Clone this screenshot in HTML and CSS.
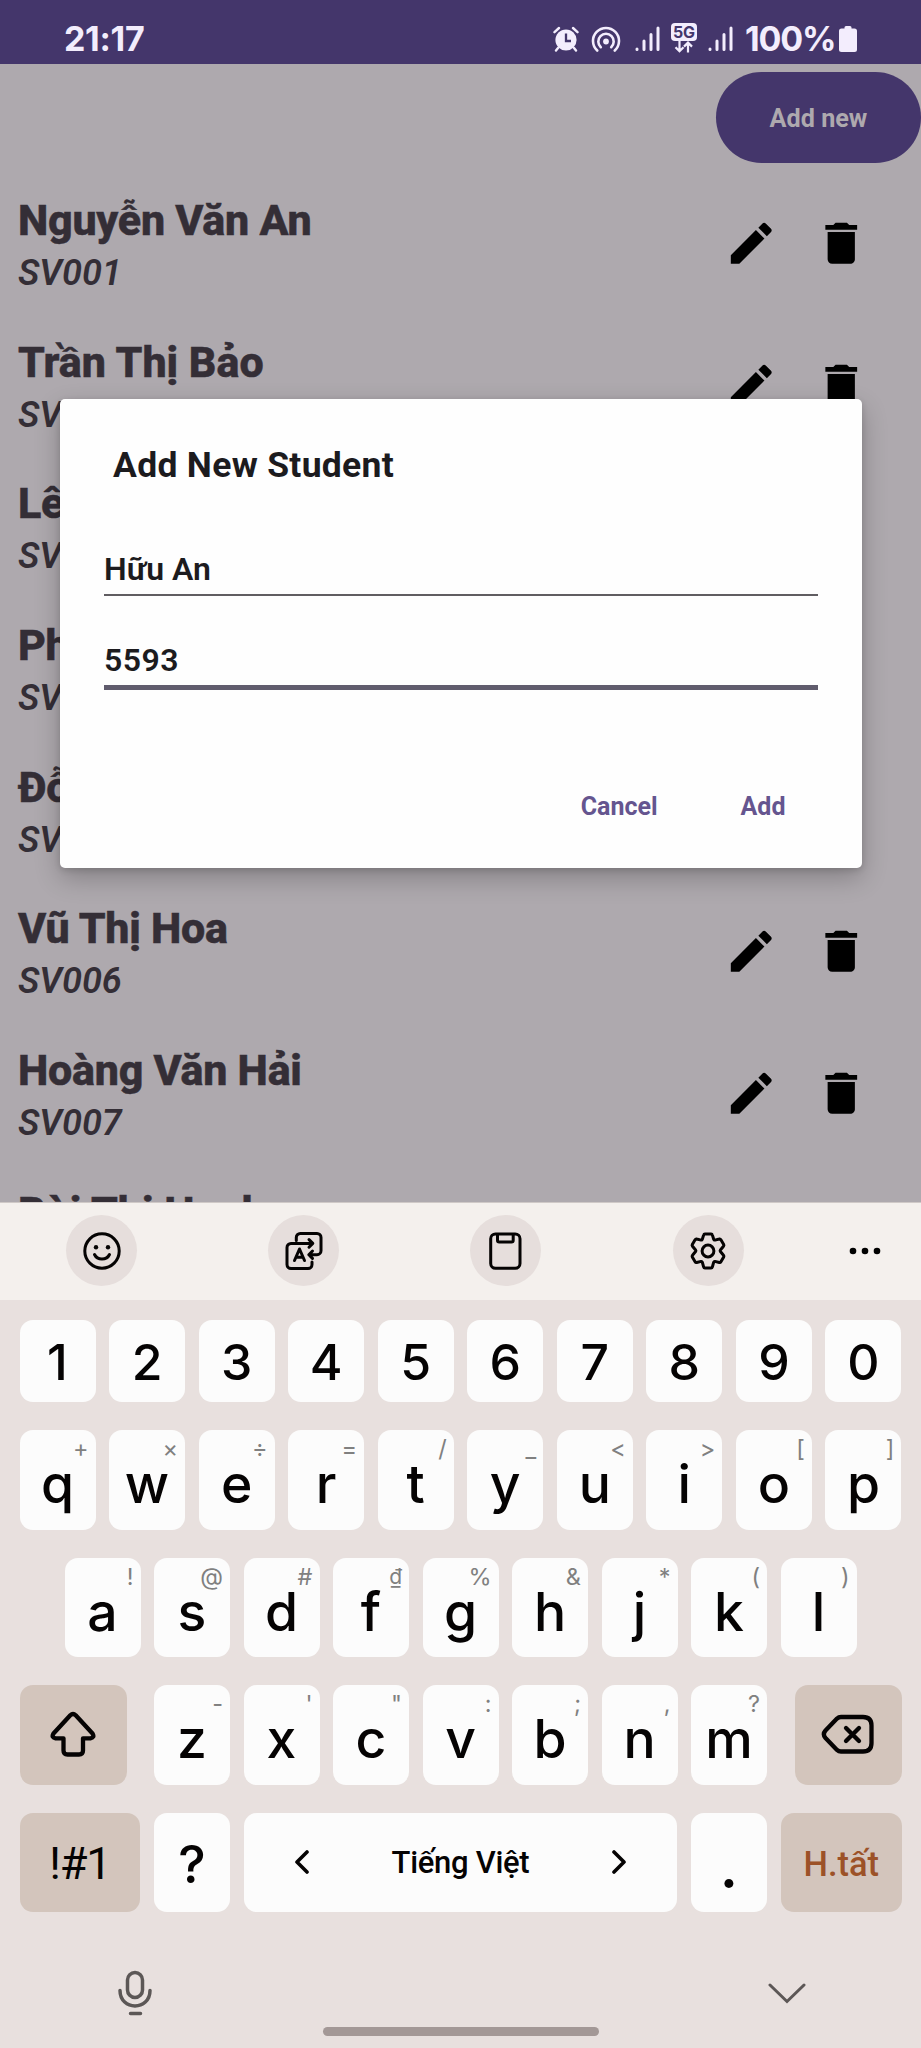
FILE: index.html
```html
<!DOCTYPE html>
<html lang="vi">
<head>
<meta charset="utf-8">
<title>Students</title>
<link rel="stylesheet" href="styles.css">
</head>
<body>
<svg class="defs" width="0" height="0">
  <symbol id="edit" viewBox="0 0 24 24"><path d="M3 17.25V21h3.75L17.81 9.94l-3.75-3.75L3 17.25zM20.71 7.04c.39-.39.39-1.02 0-1.41l-2.34-2.34c-.39-.39-1.02-.39-1.41 0l-1.83 1.83 3.75 3.75 1.83-1.83z"/></symbol>
  <symbol id="trash" viewBox="0 0 24 24"><path d="M6 19c0 1.100.9 2 2 2h8c1.100 0 2-.9 2-2V7H6v12zM19 4h-3.500l-1-1h-5l-1 1H5v2h14V4z"/></symbol>
  <symbol id="signal" viewBox="0 0 25 26"><g fill="none" stroke="currentColor" stroke-width="3" stroke-linecap="round"><path d="M2 23.500v-.6M9 23.500V15M16 23.500V8.500M23 23.500V2"/></g></symbol>
</svg>
<div class="screen">
  <header class="status">
    <span class="clock">21:17</span>
    <div class="status-icons">
      <svg class="alarm" viewBox="0 0 26 26"><circle cx="13" cy="14" r="10.600" fill="currentColor"/><g fill="none" stroke="currentColor" stroke-width="2.400" stroke-linecap="round"><path d="M1.500 6.200 6 2M24.500 6.200 20 2M5 22l-2 2.500M21 22l2 2.500"/></g><path d="M13 7.500V15h5" fill="none" stroke="#44366b" stroke-width="2.300"/></svg>
      <svg class="hotspot" viewBox="0 0 30 26"><circle cx="15" cy="15.500" r="2.900" fill="currentColor"/><g fill="none" stroke="currentColor" stroke-width="2.600" stroke-linecap="round"><path d="M6.200 24.500a13 13 0 1 1 17.600 0"/><path d="M9.800 21.200a7.700 7.700 0 1 1 10.400 0"/></g></svg>
      <svg class="bars"><use href="#signal"/></svg>
      <div class="net"><span class="net-label">5G</span><svg class="net-arrows" viewBox="0 0 22 12"><g fill="none" stroke="currentColor" stroke-width="2.200"><path d="M7.500 0v10M3.500 6.200l4 4 4-4M16 11.500V2M12 5.600l4-4 4 4"/></g></svg></div>
      <svg class="bars"><use href="#signal"/></svg>
      <span class="percent">100%</span>
      <svg class="battery" viewBox="0 0 18 26"><path fill="currentColor" d="M5.500 1.500Q5.500 0 7 0h4q1.500 0 1.500 1.500V2.500H15.500Q18 2.500 18 5V23.500Q18 26 15.500 26H2.500Q0 26 0 23.500V5Q0 2.500 2.500 2.500h3z"/></svg>
    </div>
  </header>

  <main class="app">
    <button class="add-new">Add new</button>
    <ul class="students">
      <li class="student"><div class="info"><div class="name">Nguyễn Văn An</div><div class="code">SV001</div></div><svg class="act"><use href="#edit"/></svg><svg class="act"><use href="#trash"/></svg></li>
      <li class="student"><div class="info"><div class="name loose">Trần Thị Bảo</div><div class="code">SV002</div></div><svg class="act"><use href="#edit"/></svg><svg class="act"><use href="#trash"/></svg></li>
      <li class="student"><div class="info"><div class="name">Lê</div><div class="code">SV003</div></div><svg class="act"><use href="#edit"/></svg><svg class="act"><use href="#trash"/></svg></li>
      <li class="student"><div class="info"><div class="name">Ph</div><div class="code">SV004</div></div><svg class="act"><use href="#edit"/></svg><svg class="act"><use href="#trash"/></svg></li>
      <li class="student"><div class="info"><div class="name">Đỗ</div><div class="code">SV005</div></div><svg class="act"><use href="#edit"/></svg><svg class="act"><use href="#trash"/></svg></li>
      <li class="student"><div class="info"><div class="name">Vũ Thị Hoa</div><div class="code">SV006</div></div><svg class="act"><use href="#edit"/></svg><svg class="act"><use href="#trash"/></svg></li>
      <li class="student"><div class="info"><div class="name">Hoàng Văn Hải</div><div class="code">SV007</div></div><svg class="act"><use href="#edit"/></svg><svg class="act"><use href="#trash"/></svg></li>
      <li class="student"><div class="info"><div class="name loose">Bùi Thị Hạnh</div></div></li>
    </ul>
  </main>

  <section class="dialog">
    <h2 class="dialog-title">Add New Student</h2>
    <div class="field">Hữu An</div>
    <div class="field focused">5593</div>
    <div class="dialog-actions"><span>Cancel</span><span>Add</span></div>
  </section>

  <section class="keyboard">
    <div class="tools">
      <span class="tool"><svg viewBox="0 0 40 40"><circle cx="20" cy="20" r="17.200"/><path d="M12.500 23.500c2.800 6 12.200 6 15 0"/><circle class="dot" cx="14" cy="16.200" r="2.200"/><circle class="dot" cx="26" cy="16.200" r="2.200"/></svg></span>
      <span class="tool"><svg viewBox="0 0 40 40"><path d="M12.300 9.500V6.500a4 4 0 0 1 4-4H33a4 4 0 0 1 4 4v13.200a4 4 0 0 1-4 4h-8M28.500 20l-3.700 3.700 3.700 3.700"/><path d="M28 31v2.500a4 4 0 0 1-4 4H7a4 4 0 0 1-4-4V16.400a4 4 0 0 1 4-4h21M25 8.600l3.800 3.800L25 16.200"/><path d="m10.500 29.500 5-11.500 5 11.500M12.300 26.200h6.500"/></svg></span>
      <span class="tool"><svg viewBox="0 0 40 40"><rect x="4.700" y="3" width="29.300" height="34.300" rx="4.800"/><path d="M11.500 3.500v5.800q0 1.700 1.700 1.700h12.300q1.700 0 1.700-1.700V3.500"/></svg></span>
      <span class="tool"><svg viewBox="0 0 40 40"><circle cx="20" cy="20" r="5.900"/><path d="M16.900 3h6.200q1 0 1.300 1.100l1.300 4.200q.3.900 1.200.8l4.400-1.100q1-.3 1.600.7l2.800 4.900q.5.900-.2 1.700l-3.100 3.700q-.6.700 0 1.500l3.100 3.700q.7.800.2 1.700l-2.800 4.900q-.6 1-1.600.7l-4.400-1.100q-.9-.1-1.200.8l-1.300 4.700q-.3 1.100-1.300 1.100h-6.200q-1 0-1.300-1.100l-1.300-4.700q-.3-.9-1.200-.8l-4.400 1.100q-1 .3-1.600-.7l-2.800-4.900q-.5-.9.200-1.700l3.100-3.700q.6-.8 0-1.500l-3.100-3.700q-.7-.8-.2-1.700l2.800-4.900q.6-1 1.600-.7l4.400 1.100q.9.100 1.200-.8l1.300-4.200Q15.900 3 16.900 3z"/></svg></span>
      <svg class="more" viewBox="0 0 32 8"><circle cx="4" cy="4" r="3.300"/><circle cx="16" cy="4" r="3.300"/><circle cx="28" cy="4" r="3.300"/></svg>
    </div>
    <div class="row digits">
      <span class="key">1</span><span class="key">2</span><span class="key">3</span><span class="key">4</span><span class="key">5</span><span class="key">6</span><span class="key">7</span><span class="key">8</span><span class="key">9</span><span class="key">0</span>
    </div>
    <div class="row">
      <span class="key">q<i>+</i></span><span class="key">w<i>×</i></span><span class="key">e<i>÷</i></span><span class="key">r<i>=</i></span><span class="key">t<i>/</i></span><span class="key">y<i>_</i></span><span class="key">u<i>&lt;</i></span><span class="key">i<i>&gt;</i></span><span class="key">o<i>[</i></span><span class="key">p<i>]</i></span>
    </div>
    <div class="row inset">
      <span class="key">a<i>!</i></span><span class="key">s<i>@</i></span><span class="key">d<i>#</i></span><span class="key">f<i class="dong">₫</i></span><span class="key">g<i>%</i></span><span class="key">h<i>&amp;</i></span><span class="key">j<i>*</i></span><span class="key">k<i>(</i></span><span class="key">l<i>)</i></span>
    </div>
    <div class="row">
      <span class="key fn shift"><svg viewBox="0 0 46 48"><path d="M20.300 4.200q2.700-2.600 5.400 0L42.500 22.500q2.500 4-2 4.800H33V39.500q0 4-4 4H17.500q-4 0-4-4V27.300H5.500q-4.500-.8-2-4.800z"/></svg></span><span class="key">z<i>-</i></span><span class="key">x<i>'</i></span><span class="key">c<i>"</i></span><span class="key">v<i>:</i></span><span class="key">b<i>;</i></span><span class="key">n<i>,</i></span><span class="key">m<i>?</i></span><span class="key fn back"><svg viewBox="0 0 54 42"><path d="M20 3H42q8.500 0 8.500 8.500V29q0 8.500-8.500 8.500H20q-2.300 0-4-1.600L4.500 24Q1.200 20.200 4.500 16.500L16 4.600Q17.700 3 20 3z"/><path d="m25 14 13 13M38 14 25 27"/></svg></span>
    </div>
    <div class="row last">
      <span class="key fn wide sym">!#1</span><span class="key question">?</span><span class="key space"><svg viewBox="0 0 16 24"><path d="M13 2 3 12l10 10"/></svg><b>Tiếng Việt</b><svg viewBox="0 0 16 24"><path d="m3 2 10 10L3 22"/></svg></span><span class="key period">.</span><span class="key fn wide done">H.tất</span>
    </div>
    <div class="bottom">
      <svg class="mic" viewBox="0 0 34 46"><rect x="9.500" y="2.500" width="15" height="25" rx="7.500"/><path d="M2 20.500C2 41 32 41 32 20.500M12.500 43.500h10"/></svg>
      <span class="handle"></span>
      <svg class="down" viewBox="0 0 38 22"><path d="m2 2 17 16.500L36 2"/></svg>
    </div>
  </section>
</div>
</body>
</html>
```
FILE: styles.css
```css
* { box-sizing: border-box; }
body { margin: 0; background: #aea9ae; }
.defs { position: absolute; }
.screen { position: relative; width: 921px; height: 2048px; overflow: hidden; display: flex; flex-direction: column; font-family: Roboto, sans-serif; }

.status { height: 64px; flex: none; background: #44366b; color: #f3edfd; display: flex; justify-content: space-between; padding: 0 64px 0 64px; font-family: Inter, sans-serif; font-weight: 700; }
.clock { font-size: 34px; line-height: 77px; letter-spacing: -.3px; }
.status-icons { display: flex; align-items: flex-start; }
.status-icons svg { display: block; flex: none; }
.alarm { width: 26px; height: 26px; margin-top: 26px; }
.hotspot { width: 30px; height: 26px; margin: 26px 0 0 12px; }
.bars { width: 25px; height: 26px; margin: 26px 0 0 14px; }
.net { width: 26px; margin: 23px -3px 0 11px; }
.net-label { display: block; height: 18px; border-radius: 4px; background: #f3edfd; color: #44366b; font-size: 16px; line-height: 18px; text-align: center; }
.net-arrows { width: 22px; height: 12px; margin: 0 0 0 1px; }
.percent { width: 90px; margin-left: 12px; white-space: nowrap; font-size: 34px; line-height: 77px; font-weight: 650; letter-spacing: -1.200px; }
.battery { width: 18px; height: 26px; margin: 26px 0 0 4px; }

.app { height: 1138px; flex: none; overflow: hidden; background: #aea9ae; display: flex; flex-direction: column; padding-top: 8px; }
.add-new { align-self: flex-end; width: 205px; height: 91px; flex: none; border: 0; border-radius: 46px; background: #44366b; color: #aea9ae; font: 700 25.200px/88px Roboto, sans-serif; padding: 3px 0 0; }
.students { list-style: none; margin: 31px 0 0; padding: 0; }
.student { display: flex; align-items: flex-start; height: 141.700px; padding-right: 53px; color: #342e36; }
.info { flex: 1; padding-left: 18px; }
.name { font-size: 43px; line-height: 52px; font-weight: 800; white-space: nowrap; letter-spacing: -.25px; -webkit-text-stroke: .5px #342e36; }
.name.loose { letter-spacing: 0; }
.code { font-size: 36px; line-height: 55px; font-weight: 600; font-style: italic; }
.act { width: 54.500px; height: 54.500px; margin-top: 22px; fill: #000; }
.act + .act { margin-left: 35px; }

.dialog { position: absolute; left: 60px; top: 398.500px; width: 801.500px; height: 469.500px; background: #fefefe; border-radius: 5px; box-shadow: 0 10px 26px rgba(0,0,0,.24), 0 2px 6px rgba(0,0,0,.14); color: #1c1b1e; padding: 41px 44px 0; }
.dialog-title { margin: 0 0 54px 9px; font-size: 35.500px; line-height: 50px; font-weight: 700; letter-spacing: .3px; }
.field { height: 52px; border-bottom: 2.500px solid #605d61; font-size: 32px; line-height: 50px; font-weight: 600; margin-bottom: 38px; }
.field.focused { height: 56px; line-height: 52px; border-bottom: 5px solid #605c6d; letter-spacing: .5px; }
.dialog-actions { display: flex; justify-content: flex-end; gap: 83px; padding: 59px 32px 0 0; color: #65558f; font-size: 25px; line-height: 40px; font-weight: 700; }

.keyboard { flex: 1; background: #e8e0de; font-family: Inter, sans-serif; color: #050303; }
.tools { height: 98px; background: #f4f0ed; border-top: 1px solid #cfc9c7; display: flex; align-items: center; padding: 0 0 2px 66px; gap: 131.200px; }
.tool { width: 71px; height: 71px; border-radius: 50%; background: #e6dedc; display: grid; place-items: center; }
.tool svg { width: 40px; height: 40px; fill: none; stroke: #050303; stroke-width: 3; stroke-linecap: round; stroke-linejoin: round; }
.tool .dot { fill: #050303; stroke: none; }
.more { width: 32px; height: 8px; margin-left: -26px; }
.row { display: flex; justify-content: space-between; height: 99.500px; margin: 28px 19.500px 0; }
.row.digits { height: 82px; margin-top: 20px; }
.row.inset { padding: 0 45px; }
.key { position: relative; width: 76px; padding-top: 34px; background: #fcfcfc; border-radius: 13px; text-align: center; font-size: 53.500px; line-height: 39px; font-weight: 500; }
.digits .key { padding-top: 0; font-size: 50px; line-height: 85px; }
.key i { position: absolute; top: 6px; right: 7px; font-size: 23.500px; line-height: 25px; font-weight: 400; font-style: normal; color: #808080; }
.key .dong { font-size: 21px; }
.key.fn { width: 107px; padding: 0; background: #d3c5bc; display: grid; place-items: center; }
.fn svg { fill: none; stroke: #050303; stroke-width: 4.300; stroke-linecap: round; stroke-linejoin: round; }
.shift { margin-right: 14px; }
.shift svg { width: 46px; height: 48px; }
.back { margin-left: 14px; }
.back svg { width: 54px; height: 42px; }
.key.wide { width: 120.500px; }
.key.sym { font: 400 45px/102px Roboto, sans-serif; letter-spacing: -1.200px; }
.key.question { padding-top: 0; font-size: 52px; line-height: 103px; }
.key.space { width: 433px; display: flex; align-items: center; justify-content: space-between; padding: 0 50px; }
.space svg { width: 16px; height: 24px; fill: none; stroke: #050303; stroke-width: 3.600; stroke-linecap: round; stroke-linejoin: round; }
.space b { font: 500 31px/101px Roboto, sans-serif; letter-spacing: -.3px; padding-top: 1px; }
.key.period { padding-top: 0; font-size: 62px; line-height: 105px; }
.key.done { font: 500 34.500px/102px Roboto, sans-serif; color: #9c5228; }
.bottom { height: 136px; display: flex; align-items: flex-start; padding: 0 115px 0 118px; justify-content: space-between; }
.bottom svg { fill: none; stroke: #5c5756; stroke-width: 3.500; stroke-linecap: round; }
.mic { width: 34px; height: 46px; margin-top: 58px; }
.handle { width: 276px; height: 9px; border-radius: 5px; background: #a39896; margin: 115px 0 0 1px; }
.down { width: 38px; height: 22px; margin-top: 71px; }
.bottom .down { stroke-width: 3; }
```
